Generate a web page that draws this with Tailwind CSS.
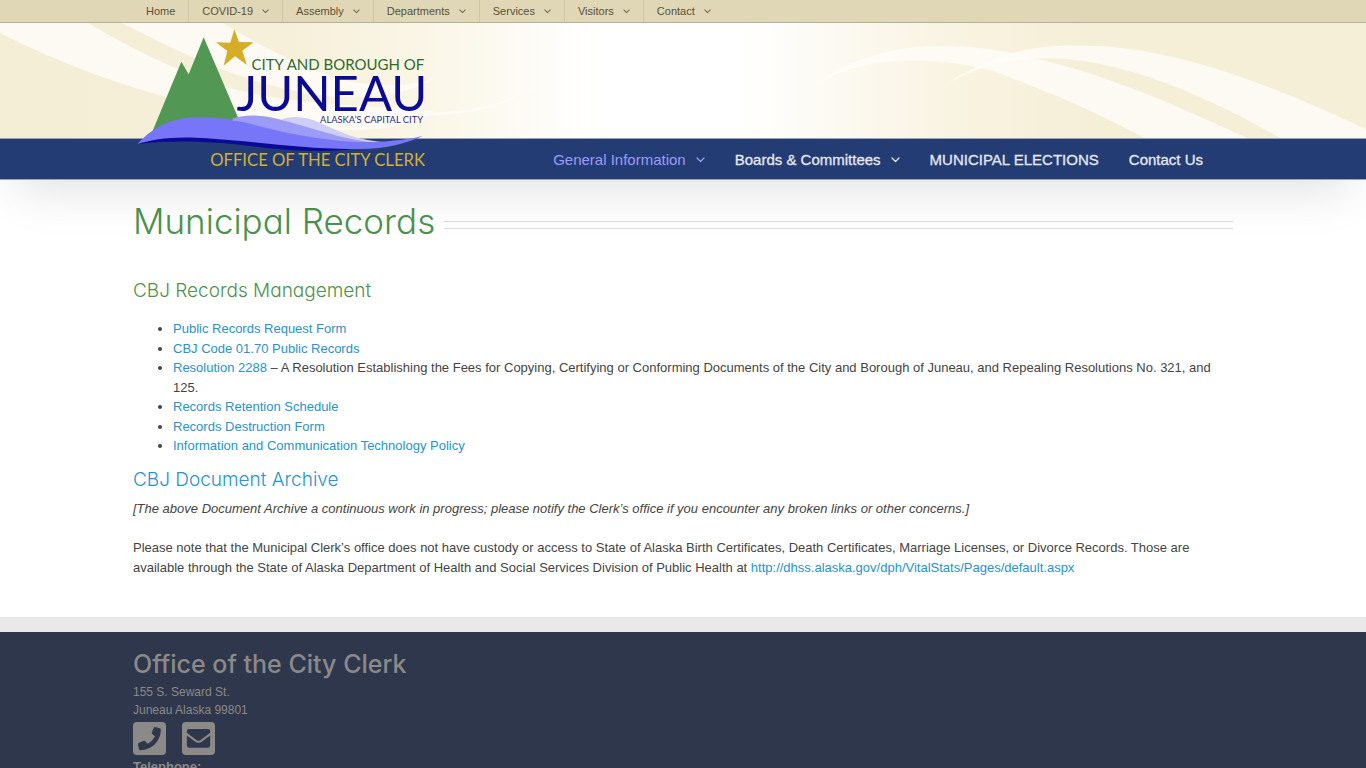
<!DOCTYPE html>
<html lang="en">
<head>
<meta charset="utf-8">
<meta name="viewport" content="width=device-width, initial-scale=1">
<title>Municipal Records – Office of the City Clerk</title>
<script src="https://cdn.jsdelivr.net/npm/@tailwindcss/browser@4"></script>
</head>
<body class="bg-white font-['Liberation_Sans',Arial,sans-serif] text-[13px] text-[#444444]">
<svg class="hidden" aria-hidden="true">
  <symbol id="chevron" viewBox="0 0 9 6"><path d="M1 1l3.500 3.500L8 1" fill="none" stroke="currentColor" stroke-width="1.300" stroke-linecap="round" stroke-linejoin="round"/></symbol>
</svg>

<header class="relative shadow-[0_26px_46px_-16px_rgba(0,0,0,0.12)]">
  <nav aria-label="City" class="border-b border-[#b3b19c] bg-[#e0d7b7] text-[11px] leading-[22px] text-[#5a5036]">
    <ul class="mx-auto flex max-w-[1100px] *:border-r *:border-[#cfc6a6] *:px-[13px] *:last:border-r-0">
      <li><a href="#">Home</a></li>
      <li><a href="#" class="flex items-center gap-[9px]">COVID-19 <svg class="h-[5px] w-[7px] opacity-80"><use href="#chevron"/></svg></a></li>
      <li><a href="#" class="flex items-center gap-[9px]">Assembly <svg class="h-[5px] w-[7px] opacity-80"><use href="#chevron"/></svg></a></li>
      <li><a href="#" class="flex items-center gap-[9px]">Departments <svg class="h-[5px] w-[7px] opacity-80"><use href="#chevron"/></svg></a></li>
      <li><a href="#" class="flex items-center gap-[9px]">Services <svg class="h-[5px] w-[7px] opacity-80"><use href="#chevron"/></svg></a></li>
      <li><a href="#" class="flex items-center gap-[9px]">Visitors <svg class="h-[5px] w-[7px] opacity-80"><use href="#chevron"/></svg></a></li>
      <li><a href="#" class="flex items-center gap-[9px]">Contact <svg class="h-[5px] w-[7px] opacity-80"><use href="#chevron"/></svg></a></li>
    </ul>
  </nav>

  <div class="h-[115px] overflow-hidden">
    <svg class="h-full w-full" viewBox="0 23 1366 115" preserveAspectRatio="none" aria-hidden="true">
      <defs>
        <linearGradient id="sand" x1="0" x2="1" y1="0" y2="0">
          <stop offset="0" stop-color="#f5eed6"/><stop offset=".2" stop-color="#f6efd9"/><stop offset=".3" stop-color="#faf5e5"/><stop offset=".44" stop-color="#fff"/><stop offset=".54" stop-color="#fff"/><stop offset=".7" stop-color="#f9f3e1"/><stop offset=".8" stop-color="#f5efd8"/><stop offset="1" stop-color="#f5efd8"/>
        </linearGradient>
      </defs>
      <rect y="23" width="1366" height="115" fill="url(#sand)"/>
      <g fill="#fffdfa" fill-opacity=".8">
        <path d="M0 23H88C130 47 160 63 205 80C280 108 370 104 437 112C480 112 515 100 552 78C505 108 470 115 430 115C400 132 350 132 300 127C240 119 205 110 160 95C110 81 60 63 0 33Z"/>
        <path d="M122 23H223C250 40 280 56 320 72C350 84 390 92 437 78C400 98 350 102 300 92C230 78 180 52 122 23Z"/>
        <path d="M814 85C850 60 890 46 940 46C980 46 1010 52 1020 55C1100 71 1180 107 1247 138H1145C1110 120 1070 99 990 70C920 54 860 58 814 85Z"/>
        <path d="M944 85C985 60 1020 44 1080 45.500C1170 46 1260 80 1366 129V138H1280C1240 115 1150 66 1066 59C1020 55 980 65 944 85Z"/>
      </g>
    </svg>
  </div>

  <nav aria-label="Department" class="border-t border-b border-[#9aa4b5] bg-[#243c74] pt-[2px] text-[15px] leading-[38px] text-[#e4e8f2]">
    <ul class="mx-auto flex max-w-[1100px] justify-end gap-[30px] pr-[30px]">
      <li><a href="#" class="flex items-center gap-[10px] text-[#9b9bf8]">General Information <svg class="h-[6px] w-[9px]"><use href="#chevron"/></svg></a></li>
      <li><a href="#" class="flex items-center gap-[10px] [-webkit-text-stroke:0.3px_currentColor]">Boards &amp; Committees <svg class="h-[6px] w-[9px]"><use href="#chevron"/></svg></a></li>
      <li><a href="#" class="[-webkit-text-stroke:0.3px_currentColor]">MUNICIPAL ELECTIONS</a></li>
      <li><a href="#" class="[-webkit-text-stroke:0.3px_currentColor]">Contact Us</a></li>
    </ul>
  </nav>

  <div class="pointer-events-none absolute inset-x-0 top-[23px]">
    <div class="mx-auto max-w-[1100px]">
      <a href="#" class="pointer-events-auto inline-block" aria-label="City and Borough of Juneau, Office of the City Clerk">
        <svg class="block h-[157px] w-[300px] font-[Lato,sans-serif]" viewBox="39 69 900 471">
          <path fill="#539755" d="M98 392L184 185l22 38L251 112l104 243-120 40z"/>
          <path fill="#d6ad28" d="M343 88l14 38 44 1-34 25 14 43-36-26-34 28 11-44-34-26 43 1z"/>
          <path fill="#cfcef8" d="M485 358C520 345 560 350 600 368C650 390 700 418 790 426L700 435L560 400Z"/>
          <path fill="#9c9bf7" d="M335 357C360 348 400 342 450 352C540 370 630 410 745 426L680 440L400 390Z"/>
          <path fill="#0b0a94" d="M53 432C120 400 200 402 290 410L720 444C640 458 540 454 440 444C330 430 200 415 53 432Z"/>
          <path fill="#7776f8" d="M53 432C90 390 150 352 230 352C330 350 400 375 500 398C600 418 700 430 780 425C840 421 880 415 908 408C860 430 800 447 720 447C560 450 420 425 260 415C160 408 100 418 53 432Z"/>
          <text x="913" y="209" text-anchor="end" font-size="45" fill="#2d6b2f">CITY AND BOROUGH OF</text>
          <text x="922" y="333" text-anchor="end" font-size="147" fill="#0b0a94">JUNEAU</text>
          <text x="909" y="370" text-anchor="end" font-size="28" fill="#2b2a94">ALASKA’S CAPITAL CITY</text>
          <text x="915" y="498" text-anchor="end" font-size="50" fill="#d0b03c">OFFICE OF THE CITY CLERK</text>
        </svg>
      </a>
    </div>
  </div>
</header>

<main class="mx-auto max-w-[1100px] pt-[16px] pb-[40px] leading-normal">
  <div class="flex items-center gap-[9px]">
    <h1 class="font-[Inter,sans-serif] text-[35px] leading-[50px] font-light text-[#4b934e] [font-feature-settings:'cv11']">Municipal Records</h1>
    <div class="mt-[8px] h-[8px] flex-1 border-y border-[#dcdde0]"></div>
  </div>
  <h2 class="mt-[30px] font-[Inter,sans-serif] text-[19px] leading-[30px] font-light text-[#4b934e] [font-feature-settings:'cv11']">CBJ Records Management</h2>
  <ul class="mt-[13px] list-disc pl-[40px]">
    <li><a href="#" class="text-[#2493d7]">Public Records Request Form</a></li>
    <li><a href="#" class="text-[#2493d7]">CBJ Code 01.70 Public Records</a></li>
    <li><a href="#" class="text-[#2493d7]">Resolution 2288</a> – A Resolution Establishing the Fees for Copying, Certifying or Conforming Documents of the City and Borough of Juneau, and Repealing Resolutions No. 321, and 125.</li>
    <li><a href="#" class="text-[#2493d7]">Records Retention Schedule</a></li>
    <li><a href="#" class="text-[#2493d7]">Records Destruction Form</a></li>
    <li><a href="#" class="text-[#2493d7]">Information and Communication Technology Policy</a></li>
  </ul>
  <h2 class="mt-[9px] font-[Inter,sans-serif] text-[19px] leading-[30px] font-light [font-feature-settings:'cv11']"><a href="#" class="text-[#2493d7]">CBJ Document Archive</a></h2>
  <p class="mt-[4px] italic">[The above Document Archive a continuous work in progress; please notify the Clerk’s office if you encounter any broken links or other concerns.]</p>
  <p class="mt-[20px]">Please note that the Municipal Clerk’s office does not have custody or access to State of Alaska Birth Certificates, Death Certificates, Marriage Licenses, or Divorce Records. Those are available through the State of Alaska Department of Health and Social Services Division of Public Health at <a href="#" class="text-[#2493d7]">http://dhss.alaska.gov/dph/VitalStats/Pages/default.aspx</a></p>
</main>

<footer class="border-t-[15px] border-[#e8e9e8] bg-[#2e374b] text-[12px] leading-[18px] text-[#8c8989]">
  <div class="mx-auto max-w-[1100px] pt-[14px]">
    <h3 class="font-[Inter,sans-serif] text-[25px] leading-[36px] font-medium [font-feature-settings:'cv11']">Office of the City Clerk</h3>
    <address class="pt-px not-italic">155 S. Seward St.<br>Juneau Alaska 99801</address>
    <div class="mt-[3px] flex gap-[16px]">
      <a href="#" aria-label="Phone"><svg class="size-[33px]" viewBox="0 0 34 34"><rect width="34" height="34" rx="4" fill="currentColor"/><path fill="#2e374b" d="M22.500 5.200l5.200 1.200c.7.200 1 .6 1 1.300C28.700 19.500 19.300 29 7.500 29c-.7 0-1.100-.4-1.300-1l-1.100-5c-.1-.6.200-1.200.8-1.400l5.200-2.200c.5-.2 1.100-.1 1.400.3l2.300 2.800c3.500-1.700 6.200-4.400 7.800-7.800l-2.800-2.300c-.4-.4-.6-.9-.4-1.500l2-5c.2-.6.600-.8 1.100-.7z"/></svg></a>
      <a href="#" aria-label="Email"><svg class="size-[33px]" viewBox="0 0 34 34"><rect width="34" height="34" rx="4" fill="currentColor"/><path fill="#2e374b" d="M5 9.500C5 8.200 6 7.300 7.300 7.300h19.400c1.300 0 2.300.9 2.300 2.200v1.700c-2 1.700-4.700 3.600-8.500 6.200-1 .7-2.400 2-3.500 2s-2.500-1.300-3.500-2C9.700 14.800 7 12.900 5 11.200z"/><path fill="#2e374b" d="M5 14c2 1.500 4.200 3.200 7.300 5.200 1.300.9 2.900 2.300 4.700 2.300s3.400-1.400 4.700-2.300c3.100-2 5.300-3.700 7.300-5.200v10.300c0 1.300-1 2.200-2.300 2.200H7.300C6 26.500 5 25.600 5 24.300z"/></svg></a>
    </div>
    <p class="pt-[3px] text-[13px] font-bold">Telephone:</p>
  </div>
</footer>
</body>
</html>
